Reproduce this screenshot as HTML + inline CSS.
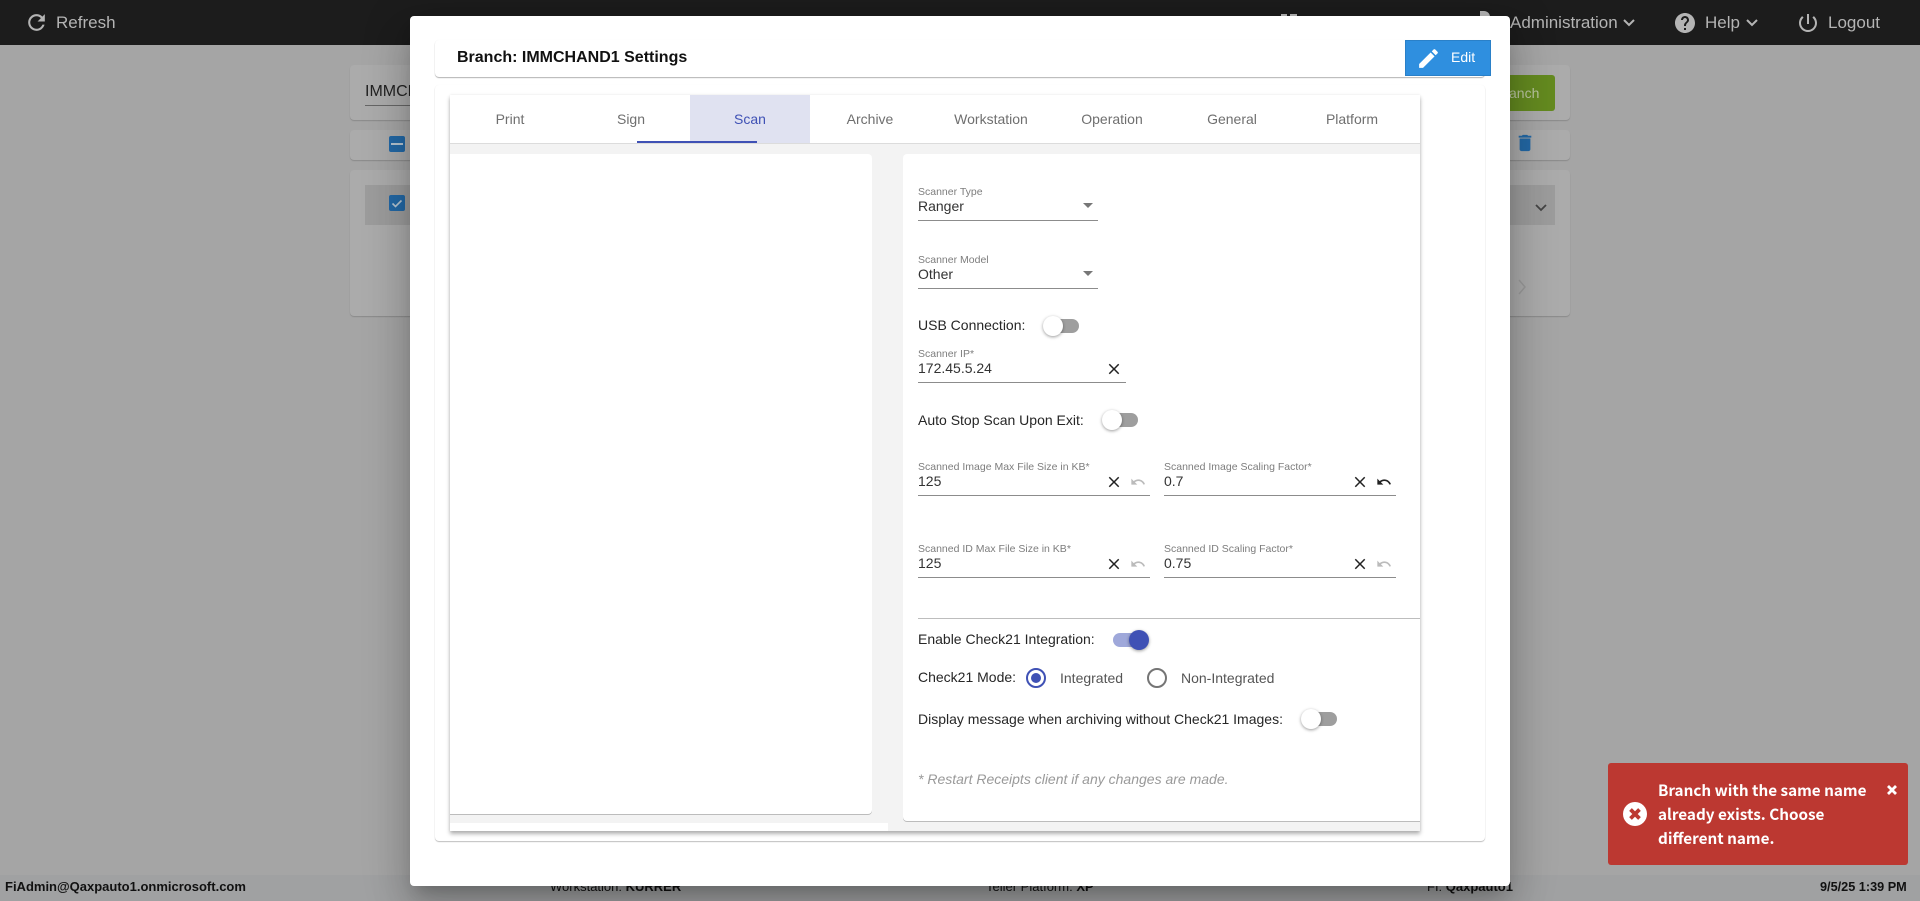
<!DOCTYPE html>
<html><head><meta charset="utf-8"><title>Branch Settings</title>
<style>
*{box-sizing:border-box}
html,body{margin:0;padding:0;width:1920px;height:901px;overflow:hidden;background:#a5a5a5;font-family:"Liberation Sans",Arial,sans-serif}
.a,.t,svg{position:absolute}
.t{white-space:nowrap;line-height:20px;height:20px}
.nav{color:#b4b4b4;font-size:17px}
.lab{color:#7d7d7d;font-size:10.5px}
.val{color:#333;font-size:14px}
.txt{color:#262626;font-size:14px}
.ul{position:absolute;height:1px;background:#8c8c8c}
.tab{position:absolute;top:95px;width:120px;height:48px;line-height:48px;text-align:center;font-size:14px;color:#6f6f6f}
.bgc{position:absolute;background:#ababab;border-radius:4px;box-shadow:0 1px 1px #8a8a8a}
.foot{color:#111;font-size:13px;font-weight:bold}
.tr{position:absolute;width:28px;height:14px;border-radius:7px;background:#9e9e9e}
.th{position:absolute;width:20px;height:20px;border-radius:50%;background:#fff;box-shadow:0 1px 3px rgba(0,0,0,.4)}
</style></head>
<body>
<!-- top bar -->
<div class="a" style="left:0;top:0;width:1920px;height:45px;background:#1c1c1c"></div>
<svg style="left:24px;top:10px" width="25" height="25" viewBox="0 0 24 24" fill="#b4b4b4"><path d="M17.65 6.35C16.2 4.9 14.21 4 12 4c-4.42 0-7.99 3.58-7.99 8s3.57 8 7.99 8c3.73 0 6.84-2.55 7.73-6h-2.08c-.82 2.33-3.04 4-5.65 4-3.31 0-6-2.69-6-6s2.69-6 6-6c1.66 0 3.14.69 4.22 1.78L13 11h7V4l-2.35 2.35z"/></svg>
<div class="t nav" style="left:56px;top:13px">Refresh</div>
<div class="a" style="left:1281px;top:14px;width:6px;height:3px;background:#b4b4b4"></div>
<div class="a" style="left:1290px;top:14px;width:7px;height:3px;background:#b4b4b4"></div>
<div class="a" style="left:1480px;top:11px;width:10px;height:6px;background:#b4b4b4;border-radius:0 8px 0 0"></div>
<div class="t nav" style="left:1510px;top:13px">Administration</div>
<svg style="left:1622px;top:17px" width="14" height="12" viewBox="0 0 14 12" fill="none" stroke="#b4b4b4" stroke-width="2"><path d="M2 3l5 5 5-5"/></svg>
<svg style="left:1673px;top:11px" width="24" height="24" viewBox="0 0 24 24" fill="#b4b4b4"><path d="M12 2C6.48 2 2 6.48 2 12s4.48 10 10 10 10-4.48 10-10S17.52 2 12 2zm1 17h-2v-2h2v2zm2.07-7.75l-.9.92C13.45 12.9 13 13.5 13 15h-2v-.5c0-1.1.45-2.1 1.17-2.83l1.24-1.26c.37-.36.59-.86.59-1.41 0-1.1-.9-2-2-2s-2 .9-2 2H8c0-2.21 1.79-4 4-4s4 1.79 4 4c0 .88-.36 1.68-.93 2.25z"/></svg>
<div class="t nav" style="left:1705px;top:13px">Help</div>
<svg style="left:1745px;top:17px" width="14" height="12" viewBox="0 0 14 12" fill="none" stroke="#b4b4b4" stroke-width="2"><path d="M2 3l5 5 5-5"/></svg>
<svg style="left:1796px;top:11px" width="24" height="24" viewBox="0 0 24 24" fill="#b4b4b4"><path d="M13 3h-2v10h2V3zm4.83 2.17l-1.42 1.42C17.99 7.86 19 9.81 19 12c0 3.87-3.13 7-7 7s-7-3.13-7-7c0-2.19 1.01-4.14 2.58-5.42L6.17 5.17C4.23 6.82 3 9.26 3 12c0 4.97 4.03 9 9 9s9-4.03 9-9c0-2.74-1.23-5.18-3.17-6.83z"/></svg>
<div class="t nav" style="left:1828px;top:13px">Logout</div>

<!-- background cards -->
<div class="bgc" style="left:350px;top:65px;width:1220px;height:55px"></div>
<div class="t" style="left:365px;top:82px;font-size:16px;color:#222">IMMCHAND1</div>
<div class="ul" style="left:365px;top:105px;width:100px;background:#666"></div>
<div class="a" style="left:1400px;top:75px;width:155px;height:36px;background:#648a20;border-radius:3px"></div>
<div class="t" style="left:1509px;top:83px;font-size:14px;color:#b9c4a0">anch</div>
<div class="bgc" style="left:350px;top:130px;width:1220px;height:30px"></div>
<div class="a" style="left:389px;top:136px;width:16px;height:16px;background:#2368a5;border-radius:2px"></div>
<div class="a" style="left:391px;top:143px;width:12px;height:2px;background:#b5c4d0"></div>
<svg style="left:1516px;top:134px" width="18" height="18" viewBox="3 2 18 20" fill="#2368a5"><path d="M6 19c0 1.1.9 2 2 2h8c1.1 0 2-.9 2-2V7H6v12zM19 4h-3.5l-1-1h-5l-1 1H5v2h14V4z"/></svg>
<div class="bgc" style="left:350px;top:170px;width:1220px;height:146px"></div>
<div class="a" style="left:365px;top:185px;width:1190px;height:40px;background:#9c9c9c"></div>
<div class="a" style="left:389px;top:195px;width:16px;height:16px;background:#2368a5;border-radius:2px"></div>
<svg style="left:389px;top:195px" width="16" height="16" viewBox="0 0 16 16" fill="none" stroke="#b5c4d0" stroke-width="1.6"><path d="M3.5 8.5l3 3 6-6"/></svg>
<svg style="left:1534px;top:202px" width="14" height="12" viewBox="0 0 14 12" fill="none" stroke="#444" stroke-width="1.8"><path d="M2 3l5 5 5-5"/></svg>
<svg style="left:1517px;top:279px" width="10" height="16" viewBox="0 0 10 16" fill="none" stroke="#999" stroke-width="1.4"><path d="M2 1l6 7-6 7"/></svg>

<!-- footer -->
<div class="a" style="left:0;top:875px;width:1920px;height:26px;background:#a0a1a2"></div>
<div class="t foot" style="left:5px;top:877px">FiAdmin@Qaxpauto1.onmicrosoft.com</div>
<div class="t foot" style="left:550px;top:877px;font-weight:normal">Workstation: <b>KURRER</b></div>
<div class="t foot" style="left:986px;top:877px;font-weight:normal">Teller Platform: <b>XP</b></div>
<div class="t foot" style="left:1427px;top:877px;font-weight:normal">FI: <b>Qaxpauto1</b></div>
<div class="t foot" style="left:1820px;top:877px;font-size:12.7px">9/5/25 1:39 PM</div>

<!-- modal -->
<div class="a" style="left:410px;top:16px;width:1100px;height:870px;background:#fff;border-radius:4px;box-shadow:0 11px 15px -7px rgba(0,0,0,.2),0 24px 38px 3px rgba(0,0,0,.14),0 9px 46px 8px rgba(0,0,0,.12)"></div>
<div class="a" style="left:435px;top:40px;width:1050px;height:37px;background:#fff;border-radius:4px;box-shadow:0 1px 1px rgba(0,0,0,.3),0 0 1px rgba(0,0,0,.06)"></div>
<div class="t" style="left:457px;top:48px;font-size:16px;font-weight:bold;color:#111">Branch: IMMCHAND1 Settings</div>
<div class="a" style="left:1405px;top:40px;width:86px;height:36px;background:#2f8fdf;border:1px solid #2a80c8"></div>
<svg style="left:1416px;top:46px" width="25" height="25" viewBox="0 0 24 24" fill="#fff"><path d="M3 17.25V21h3.75L17.81 9.94l-3.75-3.75L3 17.25zM20.71 7.04c.39-.39.39-1.02 0-1.41l-2.34-2.34c-.39-.39-1.02-.39-1.41 0l-1.83 1.83 3.75 3.75 1.83-1.83z"/></svg>
<div class="t" style="left:1451px;top:47px;font-size:14px;color:#fff">Edit</div>

<!-- outer card -->
<div class="a" style="left:435px;top:85px;width:1050px;height:756px;background:#fff;border-radius:4px;box-shadow:0 1px 1px rgba(0,0,0,.25),0 0 1px rgba(0,0,0,.06)"></div>
<!-- inner card -->
<div class="a" style="left:450px;top:95px;width:970px;height:736px;background:#f3f3f3;box-shadow:0 3px 4px rgba(0,0,0,.3),0 0 3px rgba(0,0,0,.08)"></div>
<div class="a" style="left:450px;top:95px;width:970px;height:49px;background:#fff;border-bottom:1px solid #dcdcdc"></div>
<div class="a" style="left:690px;top:95px;width:120px;height:48px;background:#e0e2f1"></div>
<div class="tab" style="left:450px">Print</div>
<div class="tab" style="left:571px">Sign</div>
<div class="tab" style="left:690px;color:#3f51b5">Scan</div>
<div class="tab" style="left:810px">Archive</div>
<div class="tab" style="left:931px">Workstation</div>
<div class="tab" style="left:1052px">Operation</div>
<div class="tab" style="left:1172px">General</div>
<div class="tab" style="left:1292px">Platform</div>
<div class="a" style="left:637px;top:141px;width:120px;height:2px;background:#3f51b5"></div>
<!-- left panel -->
<div class="a" style="left:450px;top:154px;width:422px;height:660px;background:#fff;border-radius:0 4px 4px 0;box-shadow:0 1px 0 #bcbcbc"></div>
<div class="a" style="left:450px;top:823px;width:438px;height:8px;background:#fff"></div>
<!-- right panel -->
<div class="a" style="left:903px;top:154px;width:517px;height:667px;background:#fff;border-radius:4px 0 0 4px;box-shadow:0 1px 0 #bcbcbc"></div>

<div class="t lab" style="left:918px;top:182px">Scanner Type</div>
<div class="t val" style="left:918px;top:196px">Ranger</div>
<div class="ul" style="left:918px;top:220px;width:180px"></div>
<svg style="left:1083px;top:203px" width="10" height="6"><path d="M0 0h10L5 5z" fill="#777"/></svg>

<div class="t lab" style="left:918px;top:250px">Scanner Model</div>
<div class="t val" style="left:918px;top:264px">Other</div>
<div class="ul" style="left:918px;top:288px;width:180px"></div>
<svg style="left:1083px;top:271px" width="10" height="6"><path d="M0 0h10L5 5z" fill="#777"/></svg>

<div class="t txt" style="left:918px;top:315px">USB Connection:</div>
<div class="tr" style="left:1051px;top:319px"></div><div class="th" style="left:1043px;top:316px"></div>

<div class="t lab" style="left:918px;top:344px">Scanner IP*</div>
<div class="t val" style="left:918px;top:358px">172.45.5.24</div>
<div class="ul" style="left:918px;top:382px;width:208px"></div>
<svg style="left:1105px;top:360px" width="18" height="18" viewBox="0 0 24 24" fill="#222"><path d="M19 6.41L17.59 5 12 10.59 6.41 5 5 6.41 10.59 12 5 17.59 6.41 19 12 13.41 17.59 19 19 17.59 13.41 12z"/></svg>

<div class="t txt" style="left:918px;top:410px">Auto Stop Scan Upon Exit:</div>
<div class="tr" style="left:1110px;top:413px"></div><div class="th" style="left:1102px;top:410px"></div>

<div class="t lab" style="left:918px;top:457px">Scanned Image Max File Size in KB*</div>
<div class="t val" style="left:918px;top:471px">125</div>
<div class="ul" style="left:918px;top:495px;width:232px"></div>
<svg style="left:1105px;top:473px" width="18" height="18" viewBox="0 0 24 24" fill="#222"><path d="M19 6.41L17.59 5 12 10.59 6.41 5 5 6.41 10.59 12 5 17.59 6.41 19 12 13.41 17.59 19 19 17.59 13.41 12z"/></svg>
<svg style="left:1130px;top:474px" width="16" height="16" viewBox="0 0 24 24" fill="#bbb"><path d="M12.5 8c-2.65 0-5.05.99-6.9 2.6L2 7v9h9l-3.62-3.62c1.39-1.16 3.16-1.88 5.12-1.88 3.54 0 6.55 2.31 7.6 5.5l2.37-.78C21.08 11.03 17.15 8 12.5 8z"/></svg>

<div class="t lab" style="left:1164px;top:457px">Scanned Image Scaling Factor*</div>
<div class="t val" style="left:1164px;top:471px">0.7</div>
<div class="ul" style="left:1164px;top:495px;width:232px"></div>
<svg style="left:1351px;top:473px" width="18" height="18" viewBox="0 0 24 24" fill="#222"><path d="M19 6.41L17.59 5 12 10.59 6.41 5 5 6.41 10.59 12 5 17.59 6.41 19 12 13.41 17.59 19 19 17.59 13.41 12z"/></svg>
<svg style="left:1376px;top:474px" width="16" height="16" viewBox="0 0 24 24" fill="#222"><path d="M12.5 8c-2.65 0-5.05.99-6.9 2.6L2 7v9h9l-3.62-3.62c1.39-1.16 3.16-1.88 5.12-1.88 3.54 0 6.55 2.31 7.6 5.5l2.37-.78C21.08 11.03 17.15 8 12.5 8z"/></svg>

<div class="t lab" style="left:918px;top:539px">Scanned ID Max File Size in KB*</div>
<div class="t val" style="left:918px;top:553px">125</div>
<div class="ul" style="left:918px;top:577px;width:232px"></div>
<svg style="left:1105px;top:555px" width="18" height="18" viewBox="0 0 24 24" fill="#222"><path d="M19 6.41L17.59 5 12 10.59 6.41 5 5 6.41 10.59 12 5 17.59 6.41 19 12 13.41 17.59 19 19 17.59 13.41 12z"/></svg>
<svg style="left:1130px;top:556px" width="16" height="16" viewBox="0 0 24 24" fill="#bbb"><path d="M12.5 8c-2.65 0-5.05.99-6.9 2.6L2 7v9h9l-3.62-3.62c1.39-1.16 3.16-1.88 5.12-1.88 3.54 0 6.55 2.31 7.6 5.5l2.37-.78C21.08 11.03 17.15 8 12.5 8z"/></svg>

<div class="t lab" style="left:1164px;top:539px">Scanned ID Scaling Factor*</div>
<div class="t val" style="left:1164px;top:553px">0.75</div>
<div class="ul" style="left:1164px;top:577px;width:232px"></div>
<svg style="left:1351px;top:555px" width="18" height="18" viewBox="0 0 24 24" fill="#222"><path d="M19 6.41L17.59 5 12 10.59 6.41 5 5 6.41 10.59 12 5 17.59 6.41 19 12 13.41 17.59 19 19 17.59 13.41 12z"/></svg>
<svg style="left:1376px;top:556px" width="16" height="16" viewBox="0 0 24 24" fill="#bbb"><path d="M12.5 8c-2.65 0-5.05.99-6.9 2.6L2 7v9h9l-3.62-3.62c1.39-1.16 3.16-1.88 5.12-1.88 3.54 0 6.55 2.31 7.6 5.5l2.37-.78C21.08 11.03 17.15 8 12.5 8z"/></svg>

<div class="a" style="left:918px;top:618px;width:502px;height:1px;background:#bdbdbd"></div>
<div class="t txt" style="left:918px;top:629px">Enable Check21 Integration:</div>
<div class="tr" style="left:1113px;top:633px;background:#9fa8da"></div><div class="th" style="left:1129px;top:630px;background:#3f51b5"></div>

<div class="t txt" style="left:918px;top:667px">Check21 Mode:</div>
<div class="a" style="left:1026px;top:668px;width:20px;height:20px;border:2px solid #3f51b5;border-radius:50%"></div>
<div class="a" style="left:1031px;top:673px;width:10px;height:10px;background:#3f51b5;border-radius:50%"></div>
<div class="t txt" style="left:1060px;top:668px;color:#555">Integrated</div>
<div class="a" style="left:1147px;top:668px;width:20px;height:20px;border:2px solid #757575;border-radius:50%"></div>
<div class="t txt" style="left:1181px;top:668px;color:#555">Non-Integrated</div>

<div class="t txt" style="left:918px;top:709px">Display message when archiving without Check21 Images:</div>
<div class="tr" style="left:1309px;top:712px"></div><div class="th" style="left:1301px;top:709px"></div>

<div class="t" style="left:918px;top:769px;font-size:14px;font-style:italic;color:#999">* Restart Receipts client if any changes are made.</div>

<!-- toast -->
<div class="a" style="left:1608px;top:763px;width:300px;height:102px;background:#bc3831;border-radius:3px"></div>
<div class="a" style="left:1623px;top:802px;width:24px;height:24px;background:#fff;border-radius:50%"></div>
<svg style="left:1627px;top:806px" width="16" height="16" viewBox="0 0 16 16" stroke="#bc3831" stroke-width="3.8" fill="none"><path d="M3.5 3.5l9 9M12.5 3.5l-9 9"/></svg>
<div class="t" style="left:1658px;top:778px;font-size:15.25px;font-weight:bold;color:#fff;font-family:'Noto Sans CJK JP','Liberation Sans',sans-serif;line-height:24px;height:72px;white-space:normal;width:230px">Branch with the same name<br>already exists. Choose<br>different name.</div>
<svg style="left:1886px;top:784px" width="12" height="12" viewBox="0 0 12 12" stroke="#fff" stroke-width="2.8" fill="none"><path d="M2 2l8 8M10 2l-8 8"/></svg>
</body></html>
